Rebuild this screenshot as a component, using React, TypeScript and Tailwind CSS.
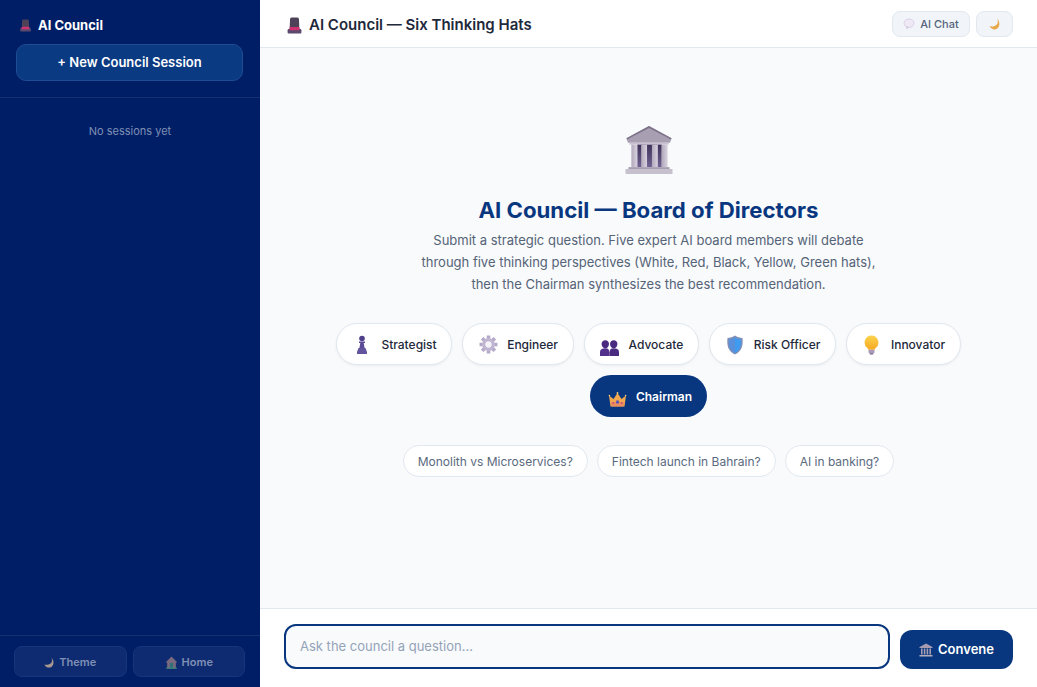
const font = "[font-family:Inter,'Liberation_Sans',sans-serif]";

function HatIcon({ size }: { size: number }) {
	return (
		<svg width={size} height={size} viewBox="0 0 16 16" className="shrink-0">
			<path d="M3.800 2Q3.800.5 5.300.5h5.400q1.500 0 1.500 1.500l.4 10H3.400z" fill="#4d4258" />
			<path d="M1.500 12.500q0-1.500 1.500-1.500h10q1.500 0 1.500 1.500v2q0 1-1 1h-11q-1 0-1-1z" fill="#5b4a6e" />
			<rect x="3.400" y="9.500" width="9.200" height="3" rx=".6" fill="#d0316f" />
		</svg>
	);
}

function TempleIcon({ size }: { size: number }) {
	return (
		<svg width={size} height={size} viewBox="0 0 48 49" className="shrink-0">
			<defs>
				<linearGradient id="columnShade" x1="0" y1="0" x2="1" y2="0">
					<stop offset="0" stopColor="#b2a9bc" />
					<stop offset="1" stopColor="#d8d2de" />
				</linearGradient>
				<linearGradient id="gapShade" x1="0" y1="0" x2="0" y2="1">
					<stop offset="0" stopColor="#3f3258" />
					<stop offset="1" stopColor="#6f6392" />
				</linearGradient>
			</defs>
			<path d="M24 0 47 12.500 45.500 17h-43L1 12.500z" fill="#a89fb3" />
			<path d="M24 0 47 12.500l-.6 1.300L24 2 1.600 13.800 1 12.500z" fill="#7d7289" />
			<rect x="4" y="17" width="40" height="2" fill="#c9c1d0" />
			<rect x="12" y="19" width="25" height="23" fill="url(#gapShade)" />
			<rect x="6" y="19" width="6" height="23" fill="url(#columnShade)" />
			<rect x="16" y="19" width="6" height="23" fill="url(#columnShade)" />
			<rect x="27" y="19" width="6" height="23" fill="url(#columnShade)" />
			<rect x="37" y="19" width="6" height="23" fill="url(#columnShade)" />
			<rect x="3" y="42" width="42" height="2" fill="#a79db0" />
			<rect x="0" y="44" width="48" height="5" rx=".5" fill="#c6c0cd" />
		</svg>
	);
}

function PawnIcon() {
	return (
		<svg width="18" height="19" viewBox="0 0 18 19" className="shrink-0">
			<circle cx="9" cy="3.500" r="2.800" fill="#4f3f8a" />
			<path d="M6 6.500h6v1.400h-1.300l.9 5.100H6.400l.9-5.100H6z" fill="#5b4b94" />
			<path d="M5.500 13h7l1.500 4v2H4v-2z" fill="#64549e" />
		</svg>
	);
}

function GearIcon() {
	return (
		<svg width="19" height="19" viewBox="0 0 18 18" className="shrink-0">
			<g stroke="#b4aac8" strokeWidth="3.400">
				<path d="M9 .5v3M9 14.500v3M.5 9h3M14.500 9h3" />
				<path d="M3 3l2.100 2.100M12.900 12.900 15 15M15 3l-2.100 2.100M5.100 12.900 3 15" />
			</g>
			<circle cx="9" cy="9" r="6" fill="#bfb5d0" />
			<circle cx="9" cy="9" r="3" fill="#f4f1f8" />
		</svg>
	);
}

function PeopleIcon() {
	return (
		<svg width="19" height="18" viewBox="0 0 18 17" className="shrink-0 translate-y-[2px]">
			<path d="M5 2c2 0 3.500 1.500 3.500 3.500S7 10 5 10 1.500 7.500 1.500 5.500 3 2 5 2z" fill="#4a2a80" />
			<path d="M13 2c2 0 3.500 1.500 3.500 3.500S15 10 13 10 9.500 7.500 9.500 5.500 11 2 13 2z" fill="#4a2a80" />
			<path d="M0 17v-3.500Q0 10.500 3 10h4q1.800.4 2 3.500V17z" fill="#52318c" />
			<path d="M9 17v-3.500q.2-3.100 2-3.500h4q3 .5 3 3.500V17z" fill="#4a2a80" />
		</svg>
	);
}

function ShieldIcon() {
	return (
		<svg width="18" height="20" viewBox="0 0 18 20" className="shrink-0">
			<path d="M9 .5C7 2 4 3 1.500 3 .6 11 2.500 16.500 9 19.500c6.500-3 8.400-8.500 7.500-16.500C14 3 11 2 9 .5z" fill="#7f8fb8" />
			<path d="M9 2.500C7.500 3.600 5 4.400 3 4.600 2.500 11 4 15.500 9 18c5-2.500 6.500-7 6-13.400-2-.2-4.500-1-6-2.100z" fill="#3f9bf0" />
			<path d="M9 2.500C7.500 3.600 5 4.400 3 4.600 2.500 11 4 15.500 9 18z" fill="#5a8fdc" />
		</svg>
	);
}

function BulbIcon() {
	return (
		<svg width="15" height="20" viewBox="0 0 15 20" className="shrink-0">
			<defs>
				<linearGradient id="bulbShade" x1="0" y1="0" x2="0" y2="1">
					<stop offset="0" stopColor="#fcd34d" />
					<stop offset="1" stopColor="#f7a823" />
				</linearGradient>
			</defs>
			<path d="M7.500.5A7 7 0 0 0 3.300 13c.7.600 1 1.100 1 1.800h6.400c0-.7.300-1.200 1-1.800A7 7 0 0 0 7.500.5z" fill="url(#bulbShade)" />
			<rect x="4.500" y="14.800" width="6" height="3.400" rx=".8" fill="#a99ab8" />
			<rect x="5.800" y="18.200" width="3.400" height="1.300" fill="#6f6185" />
		</svg>
	);
}

function CrownIcon() {
	return (
		<svg width="19" height="18" viewBox="0 0 18 18" className="shrink-0 translate-y-[2px]">
			<path d="M.5 5.500 5 9l4-6 4 6 4.500-3.500-1.500 11H2z" fill="#f2a84e" />
			<path d="M2.300 12h13.400l-.7 4.500H3z" fill="#e98c5e" />
			<circle cx="9" cy="12" r="1.700" fill="#5a55b8" />
			<circle cx="4.800" cy="13" r=".9" fill="#c94f7a" />
			<circle cx="13.200" cy="13" r=".9" fill="#c94f7a" />
			<circle cx="9" cy="3" r=".9" fill="#ffd27a" />
			<circle cx=".9" cy="5.500" r=".8" fill="#ffd27a" />
			<circle cx="17.100" cy="5.500" r=".8" fill="#ffd27a" />
		</svg>
	);
}

function MoonIcon({ size, color }: { size: number; color: string }) {
	return (
		<svg width={size} height={size} viewBox="0 0 12 12" className="shrink-0">
			<path d="M8 .5c1.800 3.400.8 7.200-4 7.900-1 .2-2.200.1-3.500-.3C1.800 10.800 4 11.800 6.200 11.500c4.400-.6 5.800-7.200 1.800-11z" fill={color} />
		</svg>
	);
}

function ChatIcon() {
	return (
		<svg width="12" height="12" viewBox="0 0 12 12" className="shrink-0">
			<ellipse cx="6" cy="5.200" rx="5" ry="4.200" fill="#efe9f6" stroke="#cfc4de" strokeWidth=".7" />
			<path d="M3.500 8.500 3 11.200 6 9.200z" fill="#cfc4de" />
		</svg>
	);
}

function HouseIcon() {
	return (
		<svg width="13" height="13" viewBox="0 0 12 12" className="shrink-0">
			<path d="M6 .5 11.500 6H10v5.500H2V6H.5z" fill="#7a6a80" />
			<rect x="4.500" y="6.500" width="3" height="5" fill="#2f6f7a" />
			<rect x="1" y="10.700" width="10" height="1" fill="#3f8a7a" />
		</svg>
	);
}

function ColumnsIcon() {
	return (
		<svg width="14" height="14" viewBox="0 0 14 14" className="shrink-0">
			<path d="M7 .5 13.500 4v1H.5V4z" fill="#a69bb0" />
			<rect x="2" y="5.500" width="1.600" height="6" fill="#a69bb0" />
			<rect x="4.800" y="5.500" width="1.600" height="6" fill="#a69bb0" />
			<rect x="7.600" y="5.500" width="1.600" height="6" fill="#a69bb0" />
			<rect x="10.400" y="5.500" width="1.600" height="6" fill="#a69bb0" />
			<rect x=".5" y="12" width="13" height="1.500" fill="#b5abbd" />
		</svg>
	);
}

const members = [
	{ name: "Strategist", icon: <PawnIcon /> },
	{ name: "Engineer", icon: <GearIcon /> },
	{ name: "Advocate", icon: <PeopleIcon /> },
	{ name: "Risk Officer", icon: <ShieldIcon /> },
	{ name: "Innovator", icon: <BulbIcon /> },
];

const suggestions = [
	"Monolith vs Microservices?",
	"Fintech launch in Bahrain?",
	"AI in banking?",
];

export default function App() {
	return (
		<div className={`flex h-[687px] w-full overflow-hidden ${font}`}>
			{/* sidebar */}
			<aside className="flex w-[260px] shrink-0 flex-col bg-[#001e66]">
				<div className="border-b border-[#14306f] pt-4 pr-[17px] pb-4 pl-4">
					<div className="mb-[9px] flex h-[19px] items-center gap-[6px] pl-[3px] text-[13px] font-bold text-white">
						<HatIcon size={13} />
						AI Council
					</div>
					<button
						type="button"
						className="h-[37px] w-full rounded-[10px] border border-[#1f4c94] bg-[#0a3a82] text-[13px] font-semibold text-white"
					>
						+ New Council Session
					</button>
				</div>
				<div className="flex-1 pt-[25px] text-center text-[11px] text-[#7f90b5]">
					No sessions yet
				</div>
				<div className="flex gap-[6px] border-t border-[#14306f] py-[10px] pr-[15px] pl-[14px]">
					<button
						type="button"
						className="flex h-[31px] flex-1 items-center justify-center gap-1 rounded-lg border border-[#16357a] bg-[#0e2a70] pt-[1px] text-[11px] font-semibold text-[#7f90b5]"
					>
						<MoonIcon size={11} color="#a8988f" />
						Theme
					</button>
					<button
						type="button"
						className="flex h-[31px] flex-1 items-center justify-center gap-1 rounded-lg border border-[#16357a] bg-[#0e2a70] pt-[1px] text-[11px] font-semibold text-[#7f90b5]"
					>
						<HouseIcon />
						Home
					</button>
				</div>
			</aside>

			{/* main */}
			<main className="flex min-w-0 flex-1 flex-col bg-[#f8fafc]">
				<header className="flex h-[48px] shrink-0 items-center justify-between border-b border-[#e2e8f0] bg-white pt-[1px] pr-6 pl-[26px]">
					<div className="flex items-center gap-[6px] pt-[2px] text-[15px] font-semibold text-[#1e293b]">
						<HatIcon size={17} />
						AI Council — Six Thinking Hats
					</div>
					<div className="flex items-center gap-[6px]">
						<button
							type="button"
							className="flex h-[26px] w-[78px] items-center justify-center gap-[5px] rounded-lg border border-[#e2e8f0] bg-[#f1f5f9] text-[11px] font-medium text-[#55637a]"
						>
							<ChatIcon />
							AI Chat
						</button>
						<button
							type="button"
							className="flex h-[26px] w-[37px] items-center justify-center rounded-lg border border-[#e2e8f0] bg-[#f1f5f9]"
						>
							<MoonIcon size={12} color="#e8a84c" />
						</button>
					</div>
				</header>

				<section className="flex flex-1 flex-col items-center pt-[78px]">
					<TempleIcon size={48} />
					<h1 className="mt-[21px] text-[22.2px] leading-[30px] font-bold text-[#08377f]">
						AI Council — Board of Directors
					</h1>
					<p className="mt-[4px] w-[480px] text-center text-[13px] leading-[22px] text-[#556377]">
						Submit a strategic question. Five expert AI board members will debate
						through five thinking perspectives (White, Red, Black, Yellow, Green
						hats), then the Chairman synthesizes the best recommendation.
					</p>

					<div className="mt-[28px] flex w-[680px] flex-wrap justify-center gap-[10px]">
						{members.map((m) => (
							<div
								key={m.name}
								className="flex h-[42px] items-center gap-[10px] rounded-full border border-[#e2e8f0] bg-white pt-[1px] pr-[14.5px] pl-[16px] text-[12px] font-medium text-[#1e293b] shadow-[0_1px_3px_rgba(0,0,0,0.06)]"
							>
								<span className="flex w-[18px] justify-center">{m.icon}</span>
								{m.name}
							</div>
						))}
						<div className="flex h-[42px] items-center gap-[9px] rounded-full bg-[#08377f] pt-[1px] pr-[15px] pl-[18px] text-[12px] font-semibold text-white">
							<CrownIcon />
							Chairman
						</div>
					</div>

					<div className="mt-[28px] flex justify-center gap-[9px]">
						{suggestions.map((s) => (
							<div
								key={s}
								className="flex h-[32px] items-center rounded-full border border-[#e2e8f0] bg-white px-[14px] pt-[1px] text-[12px] text-[#5a6a7e]"
							>
								{s}
							</div>
						))}
					</div>
				</section>

				<footer className="flex h-[79px] shrink-0 items-end gap-[10px] border-t border-[#e2e8f0] bg-white pr-6 pb-[18px] pl-6">
					<div className="flex h-[45px] flex-1 items-center rounded-xl border-2 border-[#08377f] bg-[#f8fafc] px-[14px] text-[13px] text-[#94a3b8]">
						Ask the council a question...
					</div>
					<button
						type="button"
						className="flex h-[39px] w-[113px] items-center justify-center gap-[5px] rounded-xl bg-[#08377f] text-[13px] font-semibold text-white"
					>
						<ColumnsIcon />
						Convene
					</button>
				</footer>
			</main>
		</div>
	);
}
